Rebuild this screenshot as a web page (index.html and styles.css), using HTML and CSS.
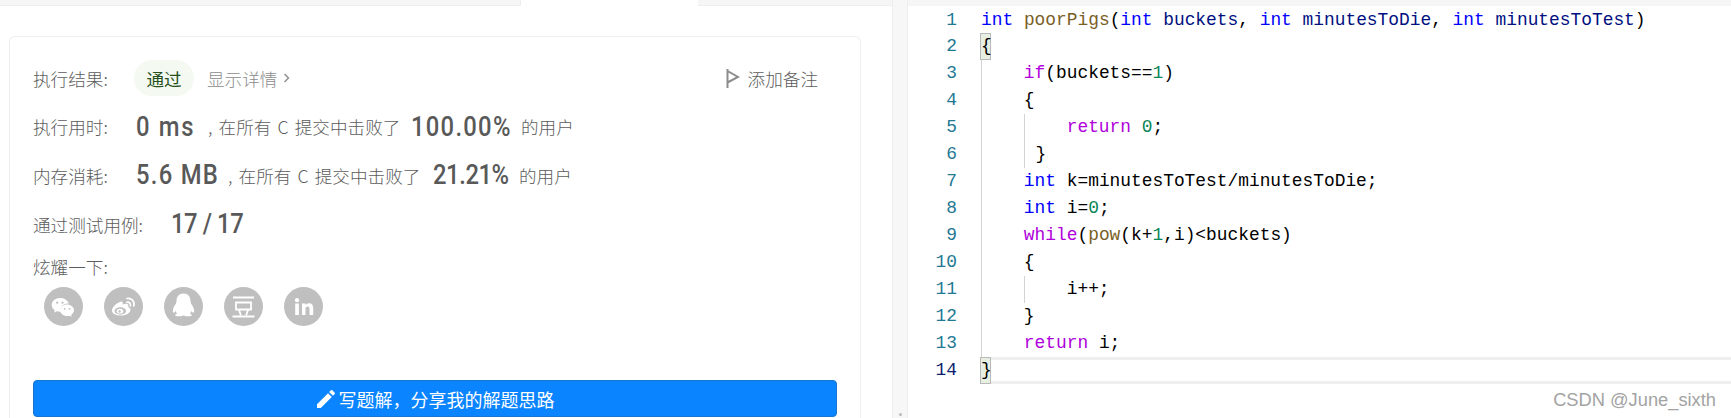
FILE: index.html
```html
<!DOCTYPE html>
<html lang="zh-CN">
<head>
<meta charset="utf-8">
<title>poorPigs</title>
<link rel="stylesheet" href="styles.css">
</head>
<body>
<div class="app">
  <section class="left">
    <div class="tabs"><div class="tab-off tab-first"></div><div class="tab-on"></div><div class="tab-off tab-rest"></div></div>
    <div class="card">
      <div class="row">
        <span class="label">执行结果:</span>
        <span class="pill">通过</span>
        <span class="details">显示详情</span>
        <svg class="chev" width="7" height="12" viewBox="0 0 7 12"><path d="M1.5 2l4 4-4 4" fill="none" stroke="#8c8c8c" stroke-width="1.4"/></svg>
        <span class="note">
          <svg width="14" height="19" viewBox="0 0 14 19"><path d="M1.500 0v19M1.500 2l10.500 6-10.500 5.500" fill="none" stroke="#8c8c8c" stroke-width="2"/></svg>
          添加备注
        </span>
      </div>
      <div class="row">
        <span class="label">执行用时:</span>
        <span class="slot slot-time"><b class="big ls-time">0 ms</b></span>
        <span class="sub">, 在所有 C 提交中击败了</span>
        <span class="slot slot-pct1"><b class="big ls-pct1">100.00%</b></span>
        <span class="tail">的用户</span>
      </div>
      <div class="row">
        <span class="label">内存消耗:</span>
        <span class="slot slot-mem"><b class="big ls-mem">5.6 MB</b></span>
        <span class="sub">, 在所有 C 提交中击败了</span>
        <span class="slot slot-pct2"><b class="big ls-pct2">21.21%</b></span>
        <span class="tail">的用户</span>
      </div>
      <div class="row">
        <span class="label label-auto">通过测试用例:</span>
        <span class="slot slot-cases"><b class="big ls-cases">17 / 17</b></span>
      </div>
      <div class="share-title">炫耀一下:</div>
      <div class="shares">
        <svg class="soc" viewBox="0 0 39 39"><circle cx="19.5" cy="19.5" r="19.5" fill="#bfbfbf"/><path d="M16 11c-4.600 0-8.300 3-8.300 6.900 0 2.200 1.200 4 3.100 5.300l-.8 2.400 2.800-1.400c1 .3 2 .5 3.200.5.300 0 .6 0 .9 0-.2-.6-.3-1.200-.3-1.900 0-3.700 3.400-6.400 7.700-6.400h.6C23.400 13 20 11 16 11z" fill="#fff"/><path d="M30 23.300c0-3.200-3.200-5.800-6.900-5.800-3.900 0-6.900 2.600-6.900 5.800s3 5.800 6.900 5.800c.8 0 1.600-.1 2.400-.4l2.200 1.200-.6-2c1.700-1.100 2.900-2.700 2.900-4.600z" fill="#fff"/><circle cx="13.200" cy="15.700" r="1.100" fill="#bfbfbf"/><circle cx="18.500" cy="15.700" r="1.100" fill="#bfbfbf"/><circle cx="20.700" cy="21.800" r=".9" fill="#bfbfbf"/><circle cx="25.500" cy="21.800" r=".9" fill="#bfbfbf"/></svg>
        <svg class="soc" viewBox="0 0 39 39"><circle cx="19.500" cy="19.500" r="19.500" fill="#bfbfbf"/><path d="M8 23.500c0-3 4-7.500 8.500-8.800 1.800-.4 2.700.6 2.100 2.700 2.400-1 4.800-1 5.600.3.400.7.300 1.500-.1 2.200 1.400.4 2.400 1.300 2.400 2.800 0 2.800-4 5.800-9.600 5.800C12 28.500 8 26.700 8 23.500z" fill="#fff"/><ellipse cx="16.300" cy="24" rx="5.800" ry="3.700" fill="#bfbfbf"/><ellipse cx="16" cy="24.300" rx="3.300" ry="2.500" fill="#fff"/><circle cx="15.600" cy="24.500" r="1.200" fill="#bfbfbf"/><path d="M23 15.200c2-.6 4 1.300 3.400 3.600M23 11.500c4.300-1 8 3 6.800 7.500" fill="none" stroke="#fff" stroke-width="1.700" stroke-linecap="round"/></svg>
        <svg class="soc" viewBox="0 0 39 39"><circle cx="19.500" cy="19.500" r="19.500" fill="#bfbfbf"/><path d="M19.500 6.500c-4.600 0-7 3.500-7 7.500 0 1-.1 1.800-.6 2.600-1.300 2-3.100 5-3.100 7.500 0 1.300.6 1.800 1.100 1.600.6-.2 1.300-1 1.700-1.700.3 1 .8 1.900 1.500 2.600-1.200.5-1.900 1.100-1.900 1.700 0 .8 1.700 1 3.700 1 1.700 0 3-.3 3.800-.9h1.600c.8.600 2.100.9 3.800.9 2 0 3.700-.2 3.700-1 0-.6-.7-1.200-1.900-1.700.7-.7 1.200-1.600 1.500-2.600.4.700 1.100 1.500 1.700 1.700.5.200 1.100-.3 1.100-1.600 0-2.500-1.800-5.500-3.100-7.500-.5-.8-.6-1.600-.6-2.600 0-4-2.400-7.500-7-7.500z" fill="#fff"/></svg>
        <svg class="soc" viewBox="0 0 39 39"><circle cx="19.500" cy="19.500" r="19.500" fill="#bfbfbf"/><path d="M9 10.500h21M12 15.500h15v7H12zM15 23l1.800 5.300M24 23l-1.800 5.300M8.500 29.500h22" fill="none" stroke="#fff" stroke-width="1.800"/></svg>
        <svg class="soc" viewBox="0 0 39 39"><circle cx="19.500" cy="19.500" r="19.500" fill="#bfbfbf"/><circle cx="13" cy="13.200" r="2.100" fill="#fff"/><path d="M11.200 16.500h3.700V28h-3.700zM18 16.500h3.500v1.600c.7-1.100 2-1.900 3.500-1.900 3 0 4.200 1.900 4.200 4.900V28h-3.700v-6c0-1.500-.5-2.600-1.900-2.600-1.500 0-2.100 1.100-2.100 2.600v6H18z" fill="#fff"/></svg>
      </div>
      <button class="cta" type="button">
        <svg width="20" height="20" viewBox="2 2 20 20"><path d="M3 17.250V21h3.750L17.810 9.940l-3.750-3.750L3 17.250zM20.710 7.040a1 1 0 0 0 0-1.410l-2.340-2.340a1 1 0 0 0-1.410 0l-1.830 1.830 3.750 3.750 1.830-1.830z" fill="#fff"/></svg>
        写题解，分享我的解题思路
      </button>
    </div>
  </section>
  <div class="split"><i class="dot"></i></div>
  <section class="editor">
    <div class="code">
      <div class="ln"><span class="n">1</span><span class="c"><span class="k">int</span> <span class="f">poorPigs</span>(<span class="k">int</span> <span class="v">buckets</span>, <span class="k">int</span> <span class="v">minutesToDie</span>, <span class="k">int</span> <span class="v">minutesToTest</span>)</span></div>
      <div class="ln"><span class="n">2</span><span class="c"><span class="bm">{</span></span></div>
      <div class="ln"><span class="n">3</span><span class="c"><span class="ig"></span><span class="p">if</span>(buckets==<span class="d">1</span>)</span></div>
      <div class="ln"><span class="n">4</span><span class="c"><span class="ig"></span>{</span></div>
      <div class="ln"><span class="n">5</span><span class="c"><span class="ig"></span><span class="ig"></span><span class="p">return</span> <span class="d">0</span>;</span></div>
      <div class="ln"><span class="n">6</span><span class="c"><span class="ig"></span><span class="ig ig-text"> }</span></span></div>
      <div class="ln"><span class="n">7</span><span class="c"><span class="ig"></span><span class="k">int</span> k=minutesToTest/minutesToDie;</span></div>
      <div class="ln"><span class="n">8</span><span class="c"><span class="ig"></span><span class="k">int</span> i=<span class="d">0</span>;</span></div>
      <div class="ln"><span class="n">9</span><span class="c"><span class="ig"></span><span class="p">while</span>(<span class="f">pow</span>(k+<span class="d">1</span>,i)&lt;buckets)</span></div>
      <div class="ln"><span class="n">10</span><span class="c"><span class="ig"></span>{</span></div>
      <div class="ln"><span class="n">11</span><span class="c"><span class="ig"></span><span class="ig"></span>i++;</span></div>
      <div class="ln"><span class="n">12</span><span class="c"><span class="ig"></span>}</span></div>
      <div class="ln"><span class="n">13</span><span class="c"><span class="ig"></span><span class="p">return</span> i;</span></div>
      <div class="ln"><span class="n n-cur">14</span><span class="c c-cur"><span class="bm">}</span></span></div>
    </div>
    <div class="mark">CSDN @June_sixth</div>
  </section>
</div>
</body>
</html>
```
FILE: styles.css
```css
* { box-sizing: border-box; }
html, body { margin: 0; height: 418px; overflow: hidden; background: #fff; }
body { font-family: "Noto Sans CJK SC", "Liberation Sans", sans-serif; font-size: 17.6px; color: #5c5c5c; }
.app { display: grid; grid-template-columns: 892px 16px 823px; height: 418px; overflow: hidden; }

.left { min-width: 0; overflow: hidden; }
.tabs { display: flex; height: 6px; }
.tab-off { background: #f6f6f6; border-bottom: 1px solid #eee; }
.tab-first { width: 521px; border-right: 1px solid #eee; }
.tab-on { width: 177px; }
.tab-rest { flex: 1; }

.card { margin: 30px 0 0 9px; width: 852px; height: 382px; padding: 17px 23px 0; border: 1px solid #eee; border-bottom: 0; border-radius: 6px 6px 0 0; }
.row { display: flex; align-items: center; height: 48.6px; white-space: nowrap; }
.label { width: 103px; flex: none; font-weight: 300; }
.label-auto { width: 138px; }
.pill { width: 60px; height: 36px; border-radius: 18px; background: #f4f9f1; color: #26501c; display: flex; align-items: center; justify-content: center; margin-left: -2px; }
.details { color: #8c8c8c; margin-left: 13px; font-weight: 300; }
.chev { margin-left: 6px; }
.note { margin-left: auto; margin-right: 19px; display: flex; align-items: center; gap: 8px; font-weight: 300; }

.slot { display: block; flex: none; }
.slot-time { width: 59px; }
.slot-mem { width: 79px; }
.slot-pct1 { width: 99px; margin-left: 13px; }
.slot-pct2 { width: 75px; margin-left: 15px; }
.slot-cases { width: 72px; }
.big { display: inline-block; font-family: Roboto, "Liberation Sans", sans-serif; font-size: 28px; font-weight: 500; line-height: 32px; color: #595959; transform: scaleX(.85); transform-origin: 0 50%; }
.ls-time { letter-spacing: 2px; }
.ls-mem { letter-spacing: 1.5px; }
.ls-pct1 { letter-spacing: 1.5px; }
.ls-pct2 { letter-spacing: -.5px; }
.ls-cases { letter-spacing: -.5px; }

.sub { margin-left: 13px; font-weight: 300; width: 190px; word-spacing: 2.300px; flex: none; }
.tail { margin-left: 11px; font-weight: 300; }
.share-title { height: 38px; line-height: 38px; font-weight: 300; }
.shares { display: flex; gap: 21px; margin: 1px 0 0 11px; }
.soc { width: 39px; height: 39px; display: block; }
.cta { display: flex; align-items: center; justify-content: center; gap: 3px; width: 804px; height: 37px; margin-top: 54px; padding: 0; background: #0a84ff; color: #fff; border: 1px solid #1876d2; border-radius: 4px; font: inherit; font-size: 18px; }

.split { background: #f7f7f7; border-left: 1px solid #eee; border-right: 1px solid #eee; display: flex; justify-content: center; align-items: flex-end; padding-bottom: 2px; }
.dot { width: 3px; height: 3px; border-radius: 50%; background: #bbb; }

.editor { position: relative; min-width: 0; overflow: hidden; }
.code { border-top: 6px solid #f6f6f6; font-family: "Liberation Mono", monospace; font-size: 17.87px; line-height: 26.95px; color: #000; padding-top: .5px; }
.ln { display: flex; height: 26.95px; }
.n { flex: none; width: 73px; padding-right: 24px; text-align: right; color: #237893; }
.n-cur { color: #0b216f; }
.c { flex: 1; display: block; white-space: pre; }
.c-cur { box-shadow: inset 0 3px #eee, inset 0 -3px #eee; }
.ig { display: inline-block; width: 4ch; height: 26.95px; vertical-align: top; border-left: 1px solid #d3d3d3; }
.ig-text { white-space: pre; }
.bm { display: inline-block; width: 11px; height: 26.95px; vertical-align: top; background: #e6efe2; border: 1px solid #b9b9b9; line-height: 25px; margin-left: -1px; }
.k { color: #0000ff; }
.p { color: #af00db; }
.f { color: #795e26; }
.v { color: #001080; }
.d { color: #098658; }
.mark { position: absolute; right: 15px; bottom: 5px; font-family: "Liberation Sans", sans-serif; font-size: 18.3px; color: #a3a3a3; line-height: 26px; }
```
